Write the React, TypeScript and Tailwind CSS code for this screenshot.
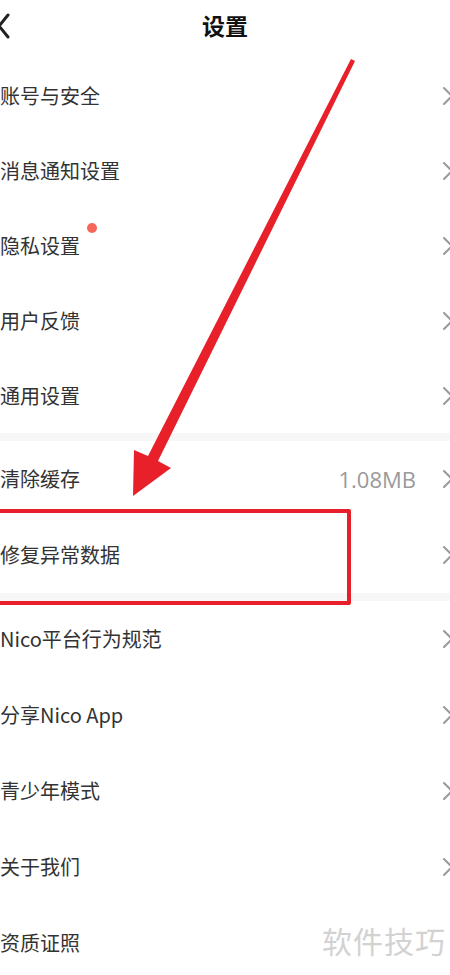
import React from "react";

type Item = { label: string; value?: string; dot?: boolean; boxed?: boolean };

const sections: { items: Item[]; rowH: string }[] = [
  {
    rowH: "h-[75px]",
    items: [
      { label: "账号与安全" },
      { label: "消息通知设置" },
      { label: "隐私设置", dot: true },
      { label: "用户反馈" },
      { label: "通用设置" },
    ],
  },
  {
    rowH: "h-[76px]",
    items: [{ label: "清除缓存", value: "1.08MB" }, { label: "修复异常数据", boxed: true }],
  },
  {
    rowH: "h-[76px]",
    items: [
      { label: "Nico平台行为规范" },
      { label: "分享Nico App" },
      { label: "青少年模式" },
      { label: "关于我们" },
      { label: "资质证照" },
    ],
  },
];

const Chevron = () => (
  <svg width="12" height="22" viewBox="0 0 12 22" className="shrink-0">
    <path d="M2 3 L10 11 L2 19" fill="none" stroke="#9a9a9a" strokeWidth="2" strokeLinecap="round" strokeLinejoin="round" />
  </svg>
);

const Row = ({ item, rowH }: { item: Item; rowH: string }) => (
  <div className={`relative flex flex-row items-center ${rowH}`}>
    <div className="relative text-[20px] text-[#333333]">
      {item.label}
      {item.dot && (
        <span className="absolute -right-[17px] -top-[8px] w-[10px] h-[10px] rounded-full bg-[#f7665a]" />
      )}
    </div>
    <div className="flex-1" />
    {item.value && (
      <div className="text-[22px] text-[#9a9a9a] mr-[26px]" style={{ fontFamily: '"Open Sans", "Noto Sans", sans-serif' }}>
        {item.value}
      </div>
    )}
    <div className="mr-[-4px]">
      <Chevron />
    </div>
    {item.boxed && (
      <div className="absolute -left-[10px] top-[-8px] w-[361px] h-[96px] border-[4px] border-[#e61f2a] rounded-[2px] z-10" />
    )}
  </div>
);

export default function App() {
  return (
    <div
      className="relative w-[450px] h-[975px] bg-white overflow-hidden"
      style={{ fontFamily: '"Noto Sans CJK SC", "Noto Sans", sans-serif' }}
    >
      <div className="relative flex items-center justify-center h-[58px]">
        <svg width="14" height="26" viewBox="0 0 14 26" className="absolute left-[-4px] top-[13px]">
          <path d="M12 2 L3 13 L12 24" fill="none" stroke="#222" strokeWidth="3" strokeLinecap="round" strokeLinejoin="round" />
        </svg>
        <div className="text-[23px] font-bold text-[#111] -mt-[8px]">设置</div>
      </div>
      {sections.map((s, si) => (
        <div key={si}>
          {si > 0 && <div className="h-[8px] bg-[#f7f7f7]" />}
          {s.items.map((it) => (
            <Row key={it.label} item={it} rowH={s.rowH} />
          ))}
        </div>
      ))}
      <div className="absolute right-0 top-[918px] pl-[6px] pr-[4px] bg-white text-[30px] text-[#d2d2d2] tracking-[1px] z-10">
        软件技巧
      </div>
      <svg className="absolute left-0 top-0 pointer-events-none z-20" width="450" height="975" viewBox="0 0 450 975">
        <polygon points="351,59 355,61 158,461 171,468 133,496 134,450 148,456" fill="#e8202a" />
      </svg>
    </div>
  );
}
